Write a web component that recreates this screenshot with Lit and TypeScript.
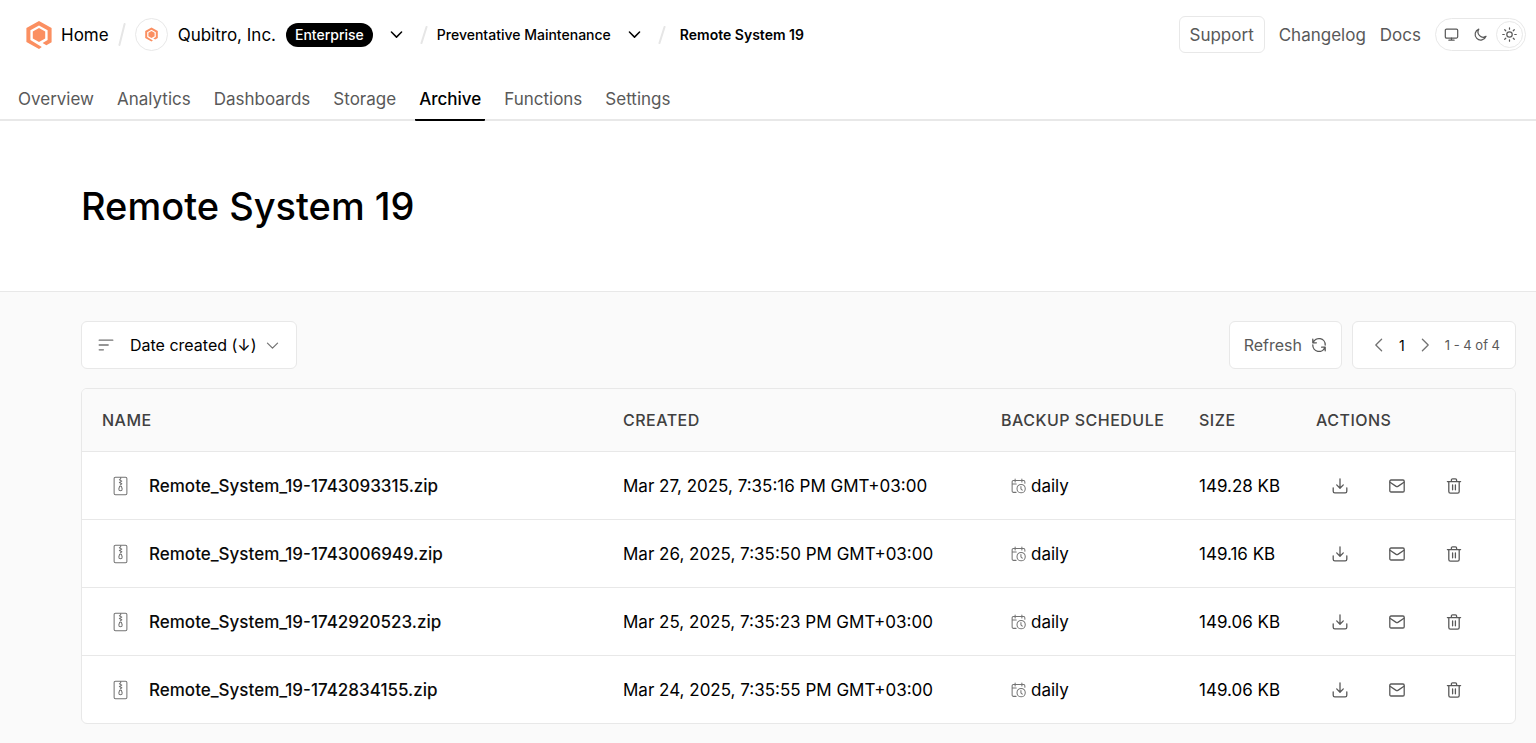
import { LitElement, html, css, svg, nothing } from "lit";
import { customElement, property, state } from "lit/decorators.js";
import { classMap } from "lit/directives/class-map.js";

interface Backup {
  id: string;
  created: string;
  schedule: string;
  size: string;
}

const TABS = ["Overview", "Analytics", "Dashboards", "Storage", "Archive", "Functions", "Settings"];

const BACKUPS: Backup[] = [
  { id: "1743093315", created: "Mar 27, 2025, 7:35:16 PM GMT+03:00", schedule: "daily", size: "149.28 KB" },
  { id: "1743006949", created: "Mar 26, 2025, 7:35:50 PM GMT+03:00", schedule: "daily", size: "149.16 KB" },
  { id: "1742920523", created: "Mar 25, 2025, 7:35:23 PM GMT+03:00", schedule: "daily", size: "149.06 KB" },
  { id: "1742834155", created: "Mar 24, 2025, 7:35:55 PM GMT+03:00", schedule: "daily", size: "149.06 KB" },
];

const GLYPHS: Record<string, unknown> = {
  "chevron-down": svg`<path d="M2.6 5.4 8 10.8l5.4-5.4"/>`,
  "chevron-left": svg`<path d="M10.6 2.2 4.8 8l5.8 5.8"/>`,
  "chevron-right": svg`<path d="M5.4 2.2 11.2 8l-5.8 5.8"/>`,
  monitor: svg`<rect x="1.4" y="2.2" width="13.2" height="9.6" rx="1.3"/><path d="M8 11.8V14M5.2 14h5.6"/>`,
  moon: svg`<path d="M6.2 2.3a6 6 0 1 0 7.7 7.7A5.6 5.6 0 0 1 6.2 2.3Z"/>`,
  sun: svg`<circle cx="8" cy="8" r="2.9"/><path d="M8 .8v1.6M8 13.6v1.6M.8 8h1.6M13.6 8h1.6M2.9 2.9 4 4M12 12l1.1 1.1M2.9 13.1 4 12M12 4l1.1-1.1"/>`,
  sort: svg`<path d="M1.2 3.2h13.6M1.2 8h9M1.2 12.8h4.2"/>`,
  refresh: svg`<path d="M2.2 5.6A6.2 6.2 0 0 1 14.2 8M13.8 10.4A6.2 6.2 0 0 1 1.8 8M1.8 2.2v3.6h3.6M14.2 13.8v-3.6h-3.6"/>`,
  zip: svg`<rect x="1.2" y=".6" width="13.6" height="18.8" rx="1.4"/><path d="M8.2 1v1.2L6.8 3.4l2.6 1.4-2.6 1.4 2.6 1.4-1.6 1.2"/><path d="M7.1 10.2h1.8l.9 3a1.8 1.8 0 1 1-3.6 0Z"/>`,
  calendar: svg`<path d="M5.4 14.8H2.6a1.4 1.4 0 0 1-1.4-1.4V3.6a1.4 1.4 0 0 1 1.4-1.4h10.8a1.4 1.4 0 0 1 1.4 1.4v1.4M1.2 5.8H5.600M4.400.6v3M11.600.6v3"/><circle cx="10.8" cy="10.8" r="4.4"/><path d="M10.6 8.6V11l1.4 1.4"/>`,
  download: svg`<path d="M8 .8v9.4M4.7 6.9 8 10.2l3.3-3.3M1.2 9.8v3.4a1.6 1.6 0 0 0 1.6 1.6h10.4a1.6 1.6 0 0 0 1.6-1.6V9.8"/>`,
  mail: svg`<rect x=".8" y="2" width="14.4" height="12" rx="1.2"/><path d="m1 4.2 6.1 4.2a1.6 1.6 0 0 0 1.8 0L15 4.2"/>`,
  trash: svg`<path d="M1.4 3.6h13.2M2.8 3.6v10a1.6 1.6 0 0 0 1.6 1.6h7.2a1.6 1.6 0 0 0 1.6-1.6v-10M5.4 3.4V2a1.2 1.2 0 0 1 1.2-1.2h2.8A1.2 1.2 0 0 1 10.6 2v1.4M6.6 7v4.8M9.4 7v4.8"/>`,
};

const BOXES: Record<string, string> = { zip: "0 0 16 20" };

@customElement("line-icon")
export class LineIcon extends LitElement {
  @property() name = "";

  static styles = css`
    :host {
      display: inline-flex;
      flex: none;
      width: 16px;
      height: 16px;
    }
    .glyph {
      width: 100%;
      height: 100%;
      fill: none;
      stroke: currentColor;
      stroke-width: var(--stroke, 1.3);
      stroke-linecap: round;
      stroke-linejoin: round;
    }
  `;

  render() {
    return html`<svg class="glyph" viewBox=${BOXES[this.name] ?? "0 0 16 16"} aria-hidden="true">
      ${GLYPHS[this.name] ?? nothing}
    </svg>`;
  }
}

@customElement("brand-mark")
export class BrandMark extends LitElement {
  static styles = css`
    :host {
      display: inline-flex;
      flex: none;
      width: 26px;
      height: 28px;
    }
    .mark {
      width: 100%;
      height: 100%;
      fill: #fb8f61;
    }
  `;

  render() {
    return html`<svg class="mark" viewBox="0 0 26 28" aria-hidden="true">
      <path
        d="M13 0 25.6 7V21.2L20.4 24.2 16.6 22 21.6 19.1V9.3L13 4.500 4.400 9.300V19.100L15.800 25.900 13 27.900 .4 20.900V7Z"
      />
      <path d="M13 7 19.2 10.500V17.500L13 21 6.800 17.500V10.500Z" />
    </svg>`;
  }
}

@customElement("app-header")
export class AppHeader extends LitElement {
  @state() private theme = "sun";

  static styles = css`
    :host {
      display: block;
    }
    .bar {
      display: flex;
      align-items: center;
      justify-content: space-between;
      height: 69px;
      padding: 0 10px 0 26px;
    }
    .crumbs,
    .links,
    .home,
    .org {
      display: flex;
      align-items: center;
    }
    a {
      color: inherit;
      text-decoration: none;
      white-space: nowrap;
    }
    button {
      display: inline-flex;
      align-items: center;
      justify-content: center;
      padding: 0;
      border: 0;
      background: none;
      color: inherit;
      font: inherit;
      cursor: pointer;
    }
    .home {
      gap: 9px;
    }
    .org {
      gap: 10px;
    }
    .avatar {
      display: flex;
      align-items: center;
      justify-content: center;
      box-sizing: border-box;
      width: 33px;
      height: 33px;
      border: 1px solid #e8e8e8;
      border-radius: 50%;
    }
    .avatar brand-mark {
      width: 13px;
      height: 15px;
    }
    .badge {
      padding: 0 9px;
      border-radius: 12px;
      background: #000;
      color: #fff;
      font-size: 14px;
      font-weight: 500;
      line-height: 24px;
    }
    .menu {
      width: 24px;
      height: 24px;
      margin: 0 11px 0 12px;
    }
    .menu line-icon {
      width: 15px;
      height: 15px;
      --stroke: 1.6;
    }
    .divider {
      width: 8px;
      height: 18px;
      margin-right: 9px;
      fill: none;
      stroke: #e6e6e6;
      stroke-width: 2;
      stroke-linecap: round;
    }
    .divider.large {
      height: 23px;
      margin: 0 9px;
    }
    .project,
    .page {
      font-size: 14px;
      font-weight: 500;
    }
    .page {
      margin-left: 5px;
      font-weight: 600;
    }
    .links {
      gap: 14px;
      color: #595959;
      font-size: 17px;
    }
    .support {
      height: 37px;
      padding: 0 10px;
      border: 1px solid #e8e8e8;
      border-radius: 6px;
    }
    .themes {
      display: flex;
      align-items: center;
      gap: 2px;
      box-sizing: border-box;
      height: 33px;
      padding: 0 2px;
      border: 1px solid #e8e8e8;
      border-radius: 17px;
    }
    .theme {
      box-sizing: border-box;
      width: 27px;
      height: 27px;
      border-radius: 50%;
    }
    .theme.on {
      border: 1px solid #e8e8e8;
    }
    .theme line-icon {
      width: 15px;
      height: 15px;
    }
  `;

  private divider(large = false) {
    return html`<svg class=${classMap({ divider: true, large })} viewBox="0 0 8 22" preserveAspectRatio="none" aria-hidden="true">
      <path d="M6.6 1 1.4 21" />
    </svg>`;
  }

  render() {
    return html`
      <header class="bar">
        <nav class="crumbs" aria-label="Breadcrumb">
          <a class="home" href="#home"><brand-mark></brand-mark>Home</a>
          ${this.divider(true)}
          <a class="org" href="#organization">
            <span class="avatar"><brand-mark></brand-mark></span>
            Qubitro, Inc.
            <span class="badge">Enterprise</span>
          </a>
          <button class="menu" aria-label="Switch organization"><line-icon name="chevron-down"></line-icon></button>
          ${this.divider()}
          <a class="project" href="#project">Preventative Maintenance</a>
          <button class="menu" aria-label="Switch project"><line-icon name="chevron-down"></line-icon></button>
          ${this.divider()}
          <a class="page" href="#device" aria-current="page">Remote System 19</a>
        </nav>
        <div class="links">
          <button class="support">Support</button>
          <a href="#changelog">Changelog</a>
          <a href="#docs">Docs</a>
          <div class="themes" role="group" aria-label="Theme">
            ${["monitor", "moon", "sun"].map(
              (name) => html`<button
                class=${classMap({ theme: true, on: this.theme === name })}
                aria-label=${name}
                aria-pressed=${this.theme === name}
                @click=${() => (this.theme = name)}
              >
                <line-icon name=${name}></line-icon>
              </button>`
            )}
          </div>
        </div>
      </header>
    `;
  }
}

@customElement("backup-table")
export class BackupTable extends LitElement {
  @property({ attribute: false }) rows: Backup[] = [];

  static styles = css`
    :host {
      display: block;
      overflow: hidden;
      border: 1px solid #e8e8e8;
      border-radius: 6px;
      background: #fff;
    }
    .grid {
      width: 100%;
      border-collapse: collapse;
      table-layout: fixed;
      font-size: 17px;
    }
    .created {
      width: 378px;
    }
    .schedule {
      width: 198px;
    }
    .size {
      width: 117px;
    }
    .actions {
      width: 219px;
    }
    th {
      box-sizing: border-box;
      height: 62px;
      padding: 0 0 0 20px;
      background: #fafafa;
      color: #404040;
      font-size: 16px;
      font-weight: 500;
      letter-spacing: 0.03em;
      text-align: left;
      white-space: nowrap;
    }
    td {
      height: 66px;
      padding: 1px 0 0 20px;
      border-top: 1px solid #e8e8e8;
      white-space: nowrap;
    }
    .cell {
      display: flex;
      align-items: center;
      color: #737373;
    }
    .file {
      gap: 21px;
      padding-left: 11px;
    }
    .file line-icon {
      width: 15px;
      height: 20px;
      --stroke: 1.1;
    }
    .file a {
      color: #0a0a0a;
      font-weight: 500;
      text-decoration: none;
    }
    .plan {
      gap: 5px;
      padding-left: 10px;
    }
    .plan line-icon {
      width: 15px;
      --stroke: 1.1;
    }
    .plan span {
      color: #000;
    }
    .tools {
      gap: 25px;
      padding-left: 8px;
    }
    .tool {
      display: flex;
      align-items: center;
      justify-content: center;
      width: 32px;
      height: 32px;
      padding: 0;
      border: 0;
      background: none;
      color: #595959;
      cursor: pointer;
    }
  `;

  render() {
    return html`
      <table class="grid">
        <thead>
          <tr>
            <th scope="col">NAME</th>
            <th scope="col" class="created">CREATED</th>
            <th scope="col" class="schedule">BACKUP SCHEDULE</th>
            <th scope="col" class="size">SIZE</th>
            <th scope="col" class="actions">ACTIONS</th>
          </tr>
        </thead>
        <tbody>
          ${this.rows.map(
            (row) => html`<tr>
              <td>
                <div class="cell file">
                  <line-icon name="zip"></line-icon>
                  <a href="#${row.id}">Remote_System_19-${row.id}.zip</a>
                </div>
              </td>
              <td>${row.created}</td>
              <td>
                <div class="cell plan"><line-icon name="calendar"></line-icon><span>${row.schedule}</span></div>
              </td>
              <td>${row.size}</td>
              <td>
                <div class="cell tools">
                  <button class="tool" aria-label="Download"><line-icon name="download"></line-icon></button>
                  <button class="tool" aria-label="Send by email"><line-icon name="mail"></line-icon></button>
                  <button class="tool" aria-label="Delete"><line-icon name="trash"></line-icon></button>
                </div>
              </td>
            </tr>`
          )}
        </tbody>
      </table>
    `;
  }
}

@customElement("app-root")
export class AppRoot extends LitElement {
  @state() private tab = "Archive";

  static styles = css`
    :host {
      display: flex;
      flex-direction: column;
      min-height: 100vh;
      background: #fff;
      color: #000;
      font-family: Inter, "Liberation Sans", sans-serif;
      font-size: 17px;
    }
    .tabs {
      display: flex;
      gap: 15px;
      padding: 10px 14px 0;
      border-bottom: 2px solid #e8e8e8;
    }
    .tab {
      margin-bottom: -2px;
      padding: 0 4px;
      border-bottom: 2px solid transparent;
      border-radius: 1px;
      color: #595959;
      line-height: 40px;
      text-decoration: none;
    }
    .tab.on {
      border-color: #000;
      color: #000;
      font-weight: 500;
    }
    .hero {
      padding: 61px 81px;
    }
    .title {
      margin: 0;
      font-size: 38px;
      font-weight: 500;
      line-height: 48px;
    }
    .content {
      flex: 1;
      padding: 29px 20px 19px 81px;
      border-top: 1px solid #e8e8e8;
      background: #fafafa;
    }
    .toolbar {
      display: flex;
      align-items: center;
      gap: 10px;
      margin-bottom: 19px;
    }
    .box {
      display: flex;
      align-items: center;
      box-sizing: border-box;
      height: 48px;
      padding: 0 15px;
      border: 1px solid #e8e8e8;
      border-radius: 6px;
      background: #fff;
      color: #595959;
      font: inherit;
      font-size: 16px;
    }
    .sort {
      gap: 16px;
      margin-right: auto;
      padding: 0 16px;
      color: #737373;
    }
    .sort .down {
      margin-left: -8px;
      width: 15px;
      height: 15px;
    }
    .field {
      appearance: none;
      padding: 0;
      border: 0;
      background: none;
      color: #000;
      font: inherit;
      cursor: pointer;
    }
    .refresh {
      gap: 9px;
      padding: 0 14px;
      cursor: pointer;
    }
    .pager {
      gap: 10px;
      padding-left: 16px;
      font-size: 13px;
    }
    .current {
      color: #000;
      font-size: 14px;
    }
    .step {
      display: flex;
      padding: 0 2px;
      border: 0;
      background: none;
      color: #737373;
      cursor: pointer;
    }
  `;

  render() {
    return html`
      <app-header></app-header>
      <nav class="tabs" aria-label="Sections">
        ${TABS.map(
          (name) => html`<a
            class=${classMap({ tab: true, on: this.tab === name })}
            href="#${name.toLowerCase()}"
            @click=${() => (this.tab = name)}
            >${name}</a
          >`
        )}
      </nav>
      <section class="hero"><h1 class="title">Remote System 19</h1></section>
      <main class="content">
        <div class="toolbar">
          <label class="box sort">
            <line-icon name="sort"></line-icon>
            <select class="field" aria-label="Sort by">
              <option>Date created (↓)</option>
            </select>
            <line-icon class="down" name="chevron-down"></line-icon>
          </label>
          <button class="box refresh">Refresh <line-icon name="refresh"></line-icon></button>
          <div class="box pager">
            <button class="step" aria-label="Previous page"><line-icon name="chevron-left"></line-icon></button>
            <span class="current">1</span>
            <button class="step" aria-label="Next page"><line-icon name="chevron-right"></line-icon></button>
            <span>1 - 4 of 4</span>
          </div>
        </div>
        <backup-table .rows=${BACKUPS}></backup-table>
      </main>
    `;
  }
}
